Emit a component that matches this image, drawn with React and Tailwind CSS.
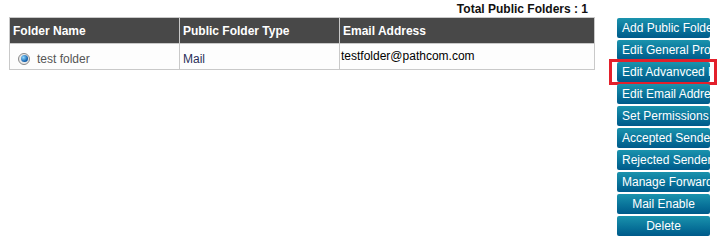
const actions = [
  "Add Public Folder",
  "Edit General Properties",
  "Edit Advanvced Properties",
  "Edit Email Addresses",
  "Set Permissions",
  "Accepted Senders",
  "Rejected Senders",
  "Manage Forwarding",
  "Mail Enable",
  "Delete",
];

export default function App() {
  return (
    <div className="flex bg-white text-[12px] font-['Liberation_Sans',Arial,sans-serif] w-[721px] h-[242px]">
      <div className="ml-[9px] w-[586px]">
        <div className="pt-[3px] pr-[7px] h-[17px] text-right font-bold text-[#111] leading-[13px]">
          Total Public Folders : 1
        </div>
        <table className="w-[586px] border-collapse table-fixed">
          <colgroup>
            <col className="w-[170px]" />
            <col className="w-[160px]" />
            <col />
          </colgroup>
          <thead>
            <tr className="bg-[#484848] text-white text-left h-[26px]">
              <th className="border border-[#c9c9c9] px-[3px] font-bold">Folder Name</th>
              <th className="border border-[#c9c9c9] px-[3px] font-bold">Public Folder Type</th>
              <th className="border border-[#c9c9c9] px-[3px] font-bold">Email Address</th>
            </tr>
          </thead>
          <tbody>
            <tr className="h-[26px] bg-[#fdfdfd]">
              <td className="border border-[#c9c9c9] pl-[8px] pt-[4px]">
                <div className="flex items-center gap-[7px]">
                  <span className="w-[12px] h-[12px] rounded-full border border-[#8a8a8a] bg-[#e9e9e9] flex items-center justify-center">
                    <span className="w-[7px] h-[7px] rounded-full bg-[radial-gradient(circle_at_35%_35%,#8fd8ff,#0c5aa8_70%)]" />
                  </span>
                  <span className="text-[#555]">test folder</span>
                </div>
              </td>
              <td className="border border-[#c9c9c9] px-[3px] pt-[4px] text-[#2a2f5a]">Mail</td>
              <td className="border border-[#c9c9c9] px-[1px] pb-[1px] text-black">testfolder@pathcom.com</td>
            </tr>
          </tbody>
        </table>
      </div>
      <div className="ml-[22px] pt-[18px] flex flex-col gap-[2px]">
        {actions.map((a, i) => (
          <div key={a} className="relative">
            <div className="w-[93px] h-[20px] rounded-[2px] bg-gradient-to-b from-[#1a93ad] to-[#005a8a] text-white text-center leading-[20px] whitespace-nowrap overflow-hidden px-[5px]">
              {a}
            </div>
            {i === 2 && (
              <div className="absolute -left-[8px] -top-[3px] w-[108px] h-[26px] border-[3px] border-[#e3202b]" />
            )}
          </div>
        ))}
      </div>
    </div>
  );
}
